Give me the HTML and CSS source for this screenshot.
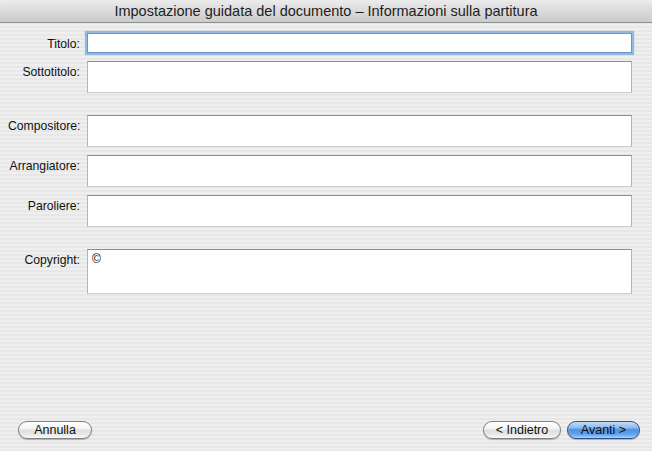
FILE: index.html
```html
<!DOCTYPE html>
<html lang="it">
  <head>
    <meta charset="UTF-8" />
    <title>Impostazione guidata del documento</title>
    <link rel="stylesheet" href="styles.css">
  </head>
  <body>
    <div class="window">
      <div class="titlebar">Impostazione guidata del documento – Informazioni sulla partitura</div>

      <div class="form">
        <div class="row">
          <label class="label">Titolo:</label>
          <div class="field field-focus"></div>
        </div>
        <div class="row">
          <label class="label">Sottotitolo:</label>
          <div class="field field-tall"></div>
        </div>
        <div class="row row-sep">
          <label class="label">Compositore:</label>
          <div class="field field-tall"></div>
        </div>
        <div class="row">
          <label class="label">Arrangiatore:</label>
          <div class="field field-tall"></div>
        </div>
        <div class="row">
          <label class="label">Paroliere:</label>
          <div class="field field-tall"></div>
        </div>
        <div class="row row-sep">
          <label class="label">Copyright:</label>
          <div class="field field-big">©</div>
        </div>
      </div>

      <div class="buttons">
        <button class="btn btn-cancel">Annulla</button>
        <div class="nav">
          <button class="btn btn-back">&lt; Indietro</button>
          <button class="btn btn-default">Avanti &gt;</button>
        </div>
      </div>
    </div>
  </body>
</html>
```

FILE: styles.css
```css
* {
  margin: 0;
  padding: 0;
  box-sizing: border-box;
  font-family: "Liberation Sans", Arial, sans-serif;
}

body {
  width: 652px;
  height: 451px;
  overflow: hidden;
}

.window {
  width: 652px;
  height: 451px;
  display: flex;
  flex-direction: column;
  background-color: #ececec;
  background-image: repeating-linear-gradient(
    to bottom,
    #efefef 0px,
    #efefef 2px,
    #e7e7e7 2px,
    #e7e7e7 4px
  );
}

.titlebar {
  height: 23px;
  line-height: 22px;
  text-align: center;
  font-size: 14.5px;
  color: #1e1e1e;
  background: linear-gradient(to bottom, #ececec 0%, #dadada 50%, #cbcbcb 100%);
  border-bottom: 1px solid #8e8e8e;
  border-radius: 5px 5px 0 0;
}

.form {
  display: flex;
  flex-direction: column;
  padding: 10px 20px 0 8px;
}

.row {
  display: flex;
  gap: 7px;
  margin-top: 8px;
}

.row:first-child {
  margin-top: 0;
}

.row-sep {
  margin-top: 22px;
}

.label {
  width: 72px;
  flex: none;
  text-align: right;
  font-size: 12.2px;
  color: #111;
  line-height: 16px;
  padding-top: 3px;
  white-space: nowrap;
}

.field {
  flex: 1;
  height: 32px;
  background: #fff;
  border-top: 1px solid #8c8c8c;
  border-left: 1px solid #b4b4b4;
  border-right: 1px solid #b4b4b4;
  border-bottom: 1px solid #cdcdcd;
  font-size: 12px;
  padding: 3px 4px;
}

.field-focus {
  height: 20px;
  border: 1px solid #6d93c9;
  box-shadow: 0 0 1px 2px #93b8e2;
}

.field-big {
  height: 45px;
  line-height: 12px;
}

.buttons {
  margin-top: auto;
  display: flex;
  justify-content: space-between;
  align-items: center;
  padding: 0 12px 12px 18px;
}

.nav {
  display: flex;
  gap: 6px;
}

.btn {
  height: 18px;
  border-radius: 9px;
  border: 1px solid #7f7f7f;
  font-size: 12.5px;
  color: #111;
  background: linear-gradient(to bottom, #ffffff 0%, #f4f4f4 40%, #dedede 55%, #e9e9e9 80%, #fafafa 100%);
  box-shadow: 0 1px 1px rgba(0, 0, 0, 0.25), inset 0 0 1px rgba(255, 255, 255, 0.9);
  line-height: 15px;
}

.btn-cancel {
  width: 74px;
}

.btn-back {
  width: 78px;
}

.btn-default {
  width: 73px;
  border-color: #294d8c;
  background: linear-gradient(to bottom, #c4dcf6 0%, #8ebbed 35%, #4d8fe0 50%, #6aa6ec 80%, #a6d3fb 100%);
}
```
